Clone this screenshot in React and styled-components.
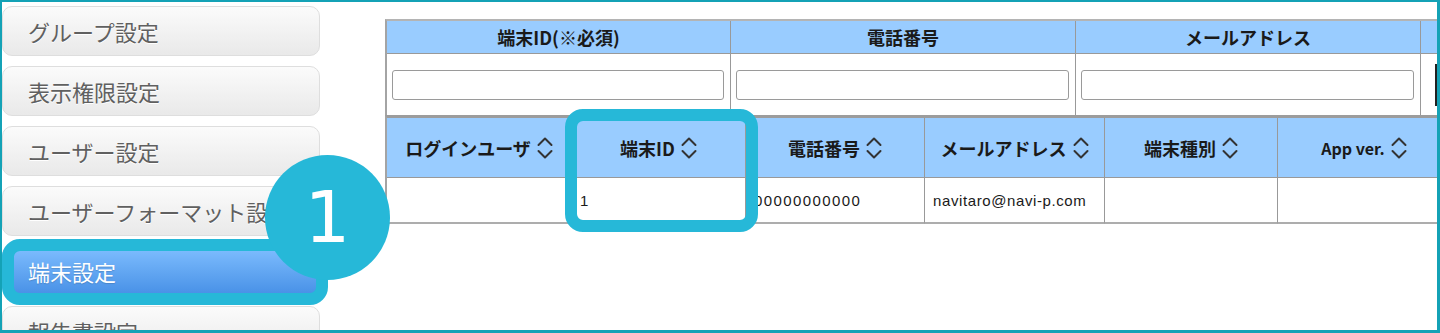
import React from "react";
import styled, { createGlobalStyle, css } from "styled-components";

const GlobalStyle = createGlobalStyle`
  body { margin: 0; background: #fff; }
  *, *::before, *::after { box-sizing: border-box; }
`;

const Frame = styled.div`
  position: relative;
  width: 1440px;
  height: 333px;
  border-style: solid;
  border-color: #14a2b6;
  border-width: 2px 3px 3px 2px;
  overflow: hidden;
  display: flex;
  background: #fff;
`;

const Sidebar = styled.nav`
  flex: 0 0 318px;
  display: flex;
  flex-direction: column;
  gap: 10px;
  padding-top: 4px;
`;

const NavButton = styled.div`
  flex: 0 0 50px;
  display: flex;
  align-items: center;
  padding-left: 25px;
  border-radius: 10px;
  font-family: "Noto Sans CJK JP", sans-serif;
  font-size: 22px;
  white-space: nowrap;
  overflow: hidden;
  ${(p) =>
    p.$active
      ? css`
          background: linear-gradient(#7fbeff, #4790e6);
          border: 1px solid #4a8fe0;
          color: #fff;
          text-shadow: 0 1px 1px rgba(0, 0, 0, 0.15);
        `
      : css`
          background: linear-gradient(#fbfbfb, #e9e9e9);
          border: 1px solid #dedede;
          color: #606060;
          text-shadow: 0 1px 0 #fff;
        `}
`;

const Main = styled.main`
  flex: none;
  margin-left: 65px;
  padding-top: 17px;
  display: flex;
  flex-direction: column;
  font-family: "Noto Sans CJK JP", sans-serif;
  color: #1a1a1a;
`;

const FilterTable = styled.div`
  display: grid;
  grid-template-columns: 344px 345px 345px 345px;
  border-left: 2px solid #a4a4a4;
  border-top: 2px solid #b4b4b4;
`;

const FilterHead = styled.div`
  height: 33px;
  background: #99ccff;
  border-right: 1px solid #999;
  border-bottom: 1px solid #999;
  display: flex;
  align-items: center;
  justify-content: center;
  font-size: 18px;
  font-weight: bold;
  line-height: 1;
`;

const FilterCell = styled.div`
  height: 61px;
  display: flex;
  align-items: center;
  padding: 0 6px 0 5px;
  border-right: 1px solid #999;
  background: #fff;
`;

const TextInput = styled.input`
  width: 100%;
  height: 30px;
  border: 1px solid #9a9a9a;
  border-radius: 3px;
  background: #fff;
`;

const DarkCell = styled(FilterCell)`
  padding: 0 0 0 14px;
`;

const DarkBox = styled.div`
  width: 80px;
  height: 42px;
  border: 2px solid #222;
`;

const DataTable = styled.div`
  display: grid;
  grid-template-columns: 185px 174px 179px 180px 173px 173px;
  border-left: 2px solid #a4a4a4;
  border-top: 3px solid #9c9c9c;
`;

const HeadCell = styled.div`
  height: 60px;
  background: #99ccff;
  border-right: 1px solid #999;
  border-bottom: 1px solid #999;
  display: flex;
  align-items: center;
  justify-content: center;
  gap: 6px;
  font-size: ${(p) => (p.$latin ? "16px" : "18px")};
  font-weight: bold;
  line-height: 1;
  white-space: nowrap;
`;

const DataCell = styled.div`
  height: 46px;
  border-right: 1px solid #999;
  border-bottom: 2px solid #adadad;
  display: flex;
  align-items: center;
  padding-left: 8px;
  font-family: "Liberation Sans", sans-serif;
  font-size: 15px;
  letter-spacing: ${(p) => (p.$wide ? "1.4px" : "0.6px")};
  white-space: nowrap;
  overflow: hidden;
  background: #fff;
`;

const Ring = styled.div`
  position: absolute;
  border: 12px solid #26b8d8;
  border-radius: 18px;
  pointer-events: none;
`;

const Badge = styled.div`
  position: absolute;
  left: 263px;
  top: 153px;
  width: 125px;
  height: 125px;
  border-radius: 50%;
  background: #26b8d8;
  color: #fff;
  display: flex;
  align-items: center;
  justify-content: center;
  font-family: "DejaVu Sans", sans-serif;
  font-size: 72px;
  line-height: 1;
  padding-bottom: 2px;
`;

const SortIcon = () => (
  <svg width="16" height="22" viewBox="0 0 16 22" fill="none" stroke="#333" strokeWidth="2" strokeLinecap="round" strokeLinejoin="round">
    <path d="M1.5 8 L8 1.5 L14.5 8" />
    <path d="M1.5 14 L8 20.5 L14.5 14" />
  </svg>
);

const navItems = ["グループ設定", "表示権限設定", "ユーザー設定", "ユーザーフォーマット設定", "端末設定", "報告書設定"];
const filterHeads = ["端末ID(※必須)", "電話番号", "メールアドレス", ""];
const columns = [
  { label: "ログインユーザ" },
  { label: "端末ID" },
  { label: "電話番号" },
  { label: "メールアドレス" },
  { label: "端末種別" },
  { label: "App ver.", latin: true },
];
const row = [
  { v: "" },
  { v: "1" },
  { v: "00000000000", wide: true },
  { v: "navitaro@navi-p.com" },
  { v: "" },
  { v: "" },
];

export default function App() {
  return (
    <>
      <GlobalStyle />
      <Frame>
        <Sidebar>
          {navItems.map((n) => (
            <NavButton key={n} $active={n === "端末設定"}>
              {n}
            </NavButton>
          ))}
        </Sidebar>
        <Main>
          <FilterTable>
            {filterHeads.map((h, i) => (
              <FilterHead key={i}>{h}</FilterHead>
            ))}
            <FilterCell><TextInput /></FilterCell>
            <FilterCell><TextInput /></FilterCell>
            <FilterCell><TextInput /></FilterCell>
            <DarkCell><DarkBox /></DarkCell>
          </FilterTable>
          <DataTable>
            {columns.map((c) => (
              <HeadCell key={c.label} $latin={c.latin}>
                <span>{c.label}</span>
                <SortIcon />
              </HeadCell>
            ))}
            {row.map((c, i) => (
              <DataCell key={i} $wide={c.wide}>{c.v}</DataCell>
            ))}
          </DataTable>
        </Main>
        <Ring style={{ left: 0, top: 237, width: 326, height: 66 }} />
        <Ring style={{ left: 563, top: 107, width: 193, height: 123 }} />
        <Badge>1</Badge>
      </Frame>
    </>
  );
}
